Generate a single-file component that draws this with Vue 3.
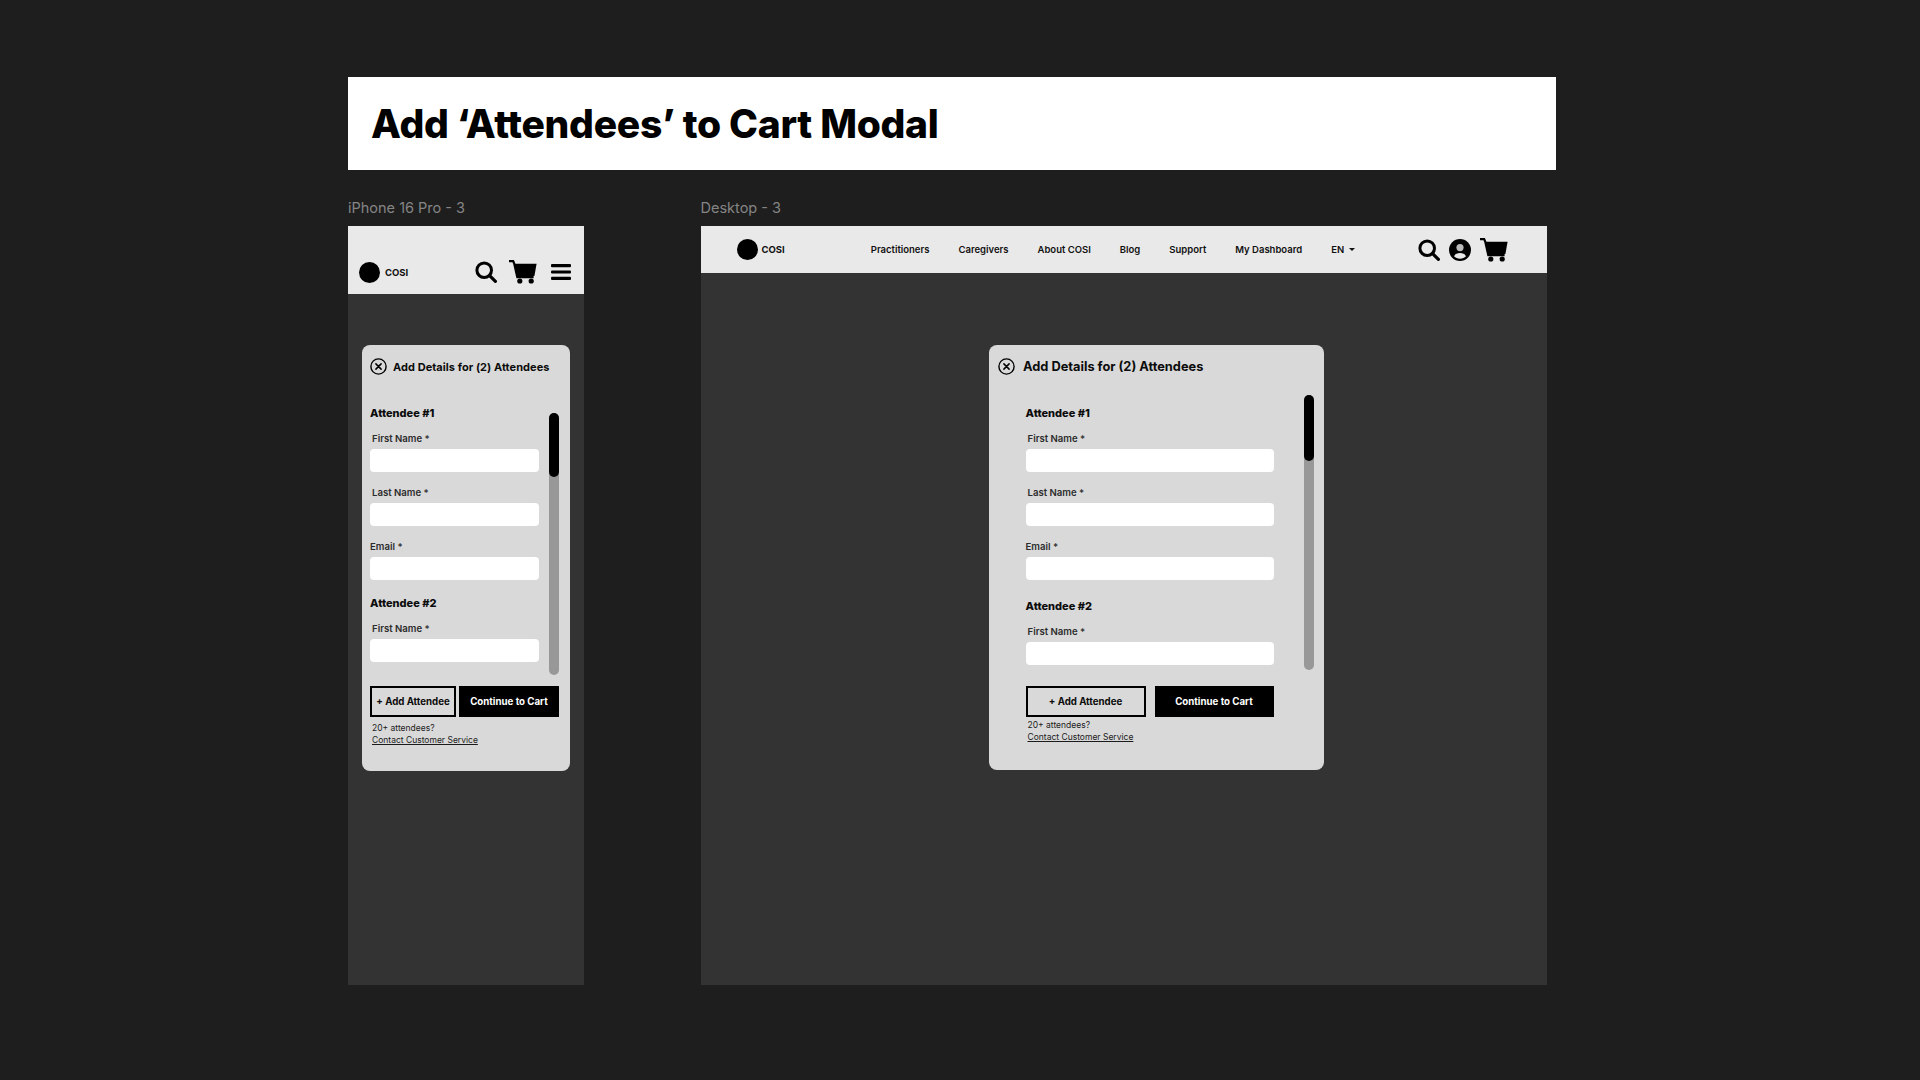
<script setup>
const navItems = ['Practitioners', 'Caregivers', 'About COSI', 'Blog', 'Support', 'My Dashboard']
const variants = ['phone', 'desktop']
const attendees = [
  { title: 'Attendee #1', fields: ['First Name *', 'Last Name *', 'Email *'] },
  { title: 'Attendee #2', fields: ['First Name *'] }
]
</script>

<template>
  <div class="page">
    <div class="title-card">
      <h1>Add ‘Attendees’ to Cart Modal</h1>
    </div>

    <div class="frames">
      <section v-for="variant in variants" :key="variant" :class="['frame-wrap', variant]">
        <div class="frame-label">{{ variant === 'phone' ? 'iPhone 16 Pro - 3' : 'Desktop - 3' }}</div>
        <div class="frame">
          <header class="topbar">
            <div class="logo">
              <span class="logo-dot"></span>
              <span class="logo-text">COSI</span>
            </div>

            <nav v-if="variant === 'desktop'" class="nav">
              <a v-for="item in navItems" :key="item" class="nav-link">{{ item }}</a>
              <a class="nav-link lang">EN <span class="caret"></span></a>
            </nav>

            <div class="top-icons">
              <svg class="icon-search" viewBox="0 0 22 22">
                <circle cx="9.2" cy="9.2" r="7.3" fill="none" stroke="#000" stroke-width="3" />
                <path d="M14.6 14.6 20.4 20.4" stroke="#000" stroke-width="3.2" stroke-linecap="round" />
              </svg>
              <svg v-if="variant === 'desktop'" class="icon-user" viewBox="0 0 22 22">
                <circle cx="11" cy="11" r="11" fill="#000" />
                <circle cx="11" cy="8.6" r="3.6" fill="#b9b9b9" />
                <path d="M5 17.200c1.200-2.300 3.200-3.200 6-3.200s4.800.9 6 3.200c-1.500 1.600-3.600 2.500-6 2.500s-4.500-.9-6-2.500Z" fill="#e9e9e9" />
              </svg>
              <svg class="icon-cart" viewBox="0 0 28 24">
                <path d="M0 1.200h4.200l1 2.300L8.300 17.200h16.300" fill="none" stroke="#000" stroke-width="2.200" />
                <path d="M5.200 3.800H27.600L25.400 16H8Z" fill="#000" />
                <circle cx="10.800" cy="21" r="2.600" fill="#000" />
                <circle cx="22.200" cy="21" r="2.600" fill="#000" />
              </svg>
              <svg v-if="variant === 'phone'" class="icon-menu" viewBox="0 0 20 16">
                <rect width="20" height="3.200" rx="1" />
                <rect y="6.400" width="20" height="3.200" rx="1" />
                <rect y="12.800" width="20" height="3.200" rx="1" />
              </svg>
            </div>
          </header>

          <div class="modal">
            <div class="modal-head">
              <svg class="icon-close" viewBox="0 0 17 17">
                <circle cx="8.500" cy="8.500" r="7.600" fill="none" stroke="#000" stroke-width="1.400" />
                <path d="M5.900 5.900 11.100 11.100M11.100 5.900 5.900 11.100" stroke="#000" stroke-width="1.500" stroke-linecap="round" />
              </svg>
              <h2>Add Details for (2) Attendees</h2>
            </div>

            <div class="modal-body">
              <form class="form">
                <div v-for="attendee in attendees" :key="attendee.title" class="attendee">
                  <h3>{{ attendee.title }}</h3>
                  <div v-for="field in attendee.fields" :key="field" class="field">
                    <label :class="{ flush: field === 'Email *' }">{{ field }}</label>
                    <input type="text" />
                  </div>
                </div>
              </form>
              <div class="scrollbar"><div class="thumb"></div></div>
            </div>

            <div class="modal-foot">
              <div class="actions">
                <button class="btn-outline" type="button">+ Add Attendee</button>
                <button class="btn-solid" type="button">Continue to Cart</button>
              </div>
              <p class="note">20+ attendees?<br /><u>Contact Customer Service</u></p>
            </div>
          </div>
        </div>
      </section>
    </div>
  </div>
</template>

<style>
body {
  margin: 0;
  background: #1e1e1e;
}
</style>

<style scoped>
.page {
  box-sizing: border-box;
  width: 1920px;
  height: 1080px;
  padding: 77px 0 0 348px;
  overflow: hidden;
  background: #1e1e1e;
  font-family: Inter, 'Liberation Sans', sans-serif;
}
.title-card {
  display: flex;
  align-items: center;
  width: 1208px;
  height: 93px;
  padding-left: 23px;
  box-sizing: border-box;
  background: #fff;
}
h1 {
  margin: 0;
  font-size: 39px;
  font-weight: 800;
  letter-spacing: -0.3px;
  color: #000;
}
.frames {
  display: flex;
  gap: 116.5px;
  margin-top: 29px;
}
.frame-label {
  height: 18px;
  margin-bottom: 9px;
  font-size: 14.5px;
  line-height: 18px;
  color: #858585;
}
.frame {
  display: flex;
  flex-direction: column;
  height: 759px;
  background: #333;
}
.phone .frame {
  width: 236px;
}
.desktop .frame {
  width: 846.5px;
}

.topbar {
  display: flex;
  align-items: center;
  box-sizing: border-box;
  background: #e9e9e9;
}
.phone .topbar {
  height: 68px;
  padding: 24px 13px 0 11px;
}
.desktop .topbar {
  height: 47px;
  padding: 0 39px 0 36px;
}
.logo {
  display: flex;
  align-items: center;
  gap: 4px;
}
.phone .logo {
  gap: 5px;
}
.logo-dot {
  width: 21px;
  height: 21px;
  border-radius: 50%;
  background: #000;
}
.logo-text {
  font-size: 9.5px;
  font-weight: 700;
  color: #111;
}
.nav {
  display: flex;
  align-items: center;
  gap: 29px;
  margin-left: 86px;
}
.nav-link {
  font-size: 9.5px;
  font-weight: 600;
  color: #111;
  white-space: nowrap;
}
.lang {
  display: flex;
  align-items: center;
  gap: 5px;
}
.caret {
  width: 0;
  height: 0;
  border-left: 3px solid transparent;
  border-right: 3px solid transparent;
  border-top: 3px solid #111;
}
.top-icons {
  display: flex;
  align-items: center;
  margin-left: auto;
}
.icon-search {
  width: 22px;
  height: 22px;
}
.icon-user {
  width: 22px;
  height: 22px;
  margin-left: 9px;
}
.icon-cart {
  width: 28px;
  height: 24px;
  margin-left: 9px;
}
.phone .icon-cart {
  margin-left: 12px;
}
.icon-menu {
  width: 20px;
  height: 16px;
  margin-left: 14px;
}

.modal {
  box-sizing: border-box;
  background: #d9d9d9;
  border-radius: 8px;
}
.phone .modal {
  width: 208px;
  height: 426px;
  margin: 51px 0 0 14px;
  padding: 0 11px 0 8px;
}
.desktop .modal {
  width: 335px;
  height: 425px;
  margin: 72px 0 0 288.5px;
  padding: 0 10px 0 9px;
}
.modal-head {
  display: flex;
  align-items: center;
  height: 43px;
}
.icon-close {
  flex: none;
  width: 17px;
  height: 17px;
}
h2 {
  margin: 0;
  font-weight: 700;
  white-space: nowrap;
  color: #0c0c0c;
}
.phone h2 {
  margin-left: 6px;
  font-size: 11px;
  letter-spacing: 0.05px;
}
.desktop h2 {
  margin-left: 8px;
  font-size: 12.8px;
}
.modal-body {
  display: flex;
  justify-content: space-between;
  height: 298px;
}
.desktop .form {
  padding-left: 27.5px;
}
.phone .form {
  padding-left: 0;
}
.attendee {
  padding-top: 18px;
}
.attendee + .attendee {
  padding-top: 16px;
}
.desktop .attendee + .attendee {
  padding-top: 19px;
}
h3 {
  margin: 0;
  font-size: 11px;
  line-height: 14px;
  font-weight: 800;
  color: #0c0c0c;
}
.field {
  padding-top: 12px;
}
.field + .field {
  padding-top: 14px;
}
label {
  display: block;
  height: 12px;
  margin: 0 0 5px 2px;
  font-size: 9.6px;
  line-height: 13px;
  font-weight: 600;
  color: #2c2c2c;
}
label.flush {
  margin-left: 0;
}
input {
  display: block;
  box-sizing: border-box;
  height: 23px;
  padding: 0;
  border: 0;
  border-radius: 4px;
  background: #fff;
}
.phone input {
  width: 169px;
}
.desktop input {
  width: 248px;
}
.scrollbar {
  flex: none;
  width: 10px;
  border-radius: 5px;
  background: #989898;
}
.phone .scrollbar {
  height: 262px;
  margin-top: 25px;
}
.desktop .scrollbar {
  height: 275px;
  margin-top: 7px;
}
.thumb {
  border-radius: 5px;
  background: #000;
}
.phone .thumb {
  height: 64px;
}
.desktop .thumb {
  height: 66px;
}
.desktop .modal-foot {
  padding-left: 27.5px;
}
.actions {
  display: flex;
}
button {
  box-sizing: border-box;
  height: 31px;
  padding: 0;
  font-family: inherit;
  font-size: 9.7px;
  font-weight: 700;
  border-radius: 0;
}
.btn-outline {
  background: transparent;
  border: 2px solid #000;
  color: #0c0c0c;
}
.btn-solid {
  background: #000;
  border: 0;
  color: #fff;
}
.phone .btn-outline {
  width: 86px;
}
.phone .btn-solid {
  width: 100px;
  margin-left: 3px;
}
.desktop .btn-outline {
  width: 120px;
}
.desktop .btn-solid {
  width: 119px;
  margin-left: 9px;
}
.note {
  margin: 0 0 0 2px;
  font-size: 8.5px;
  line-height: 12px;
  color: #1c1c1c;
}
.phone .note {
  padding-top: 5px;
}
.desktop .note {
  padding-top: 2px;
}
</style>
